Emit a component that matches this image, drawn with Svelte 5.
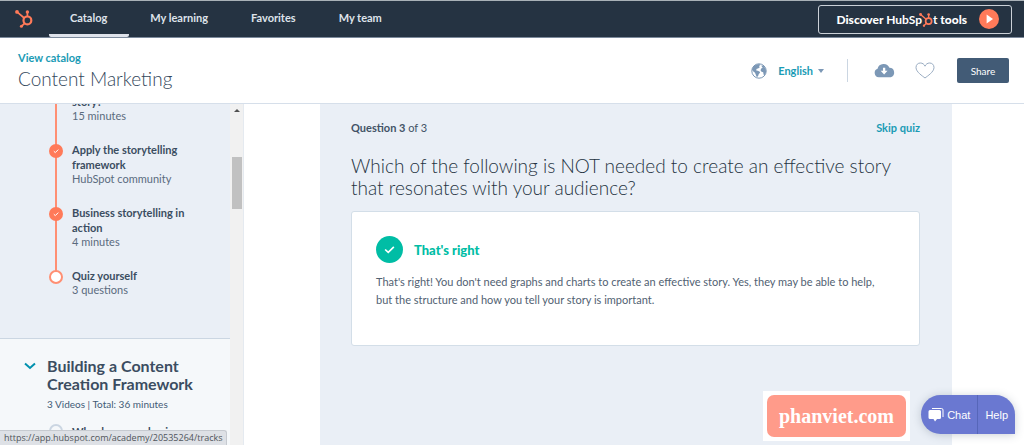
<script>
    let tabs = ['Catalog', 'My learning', 'Favorites', 'My team'];
    let active = 'Catalog';
    let lessons = [
        { lines: ['story?'], info: '15 minutes', done: true },
        { lines: ['Apply the storytelling', 'framework'], info: 'HubSpot community', done: true },
        { lines: ['Business storytelling in', 'action'], info: '4 minutes', done: true },
        { lines: ['Quiz yourself'], info: '3 questions', done: false }
    ];
</script>

{#snippet sprocket()}
    <svg class="sprocket" viewBox="0 0 18 18" aria-hidden="true">
        <g fill="none" stroke="#ff7a59">
            <circle cx="12.4" cy="10.4" r="3.9" stroke-width="2.2" />
            <path d="M12.4 6.5V2.2M9.2 8L2 1.9M9.6 13.3L6.6 16.2" stroke-width="1.7" />
        </g>
        <g fill="#ff7a59">
            <circle cx="12.4" cy="1.9" r="1.7" />
            <circle cx="2" cy="1.9" r="1.9" />
            <circle cx="6.4" cy="16.3" r="1.5" />
        </g>
    </svg>
{/snippet}

<div class="page">
    <header class="topbar">
        <a class="logo" href="#home" aria-label="HubSpot">{@render sprocket()}</a>
        <nav>
            {#each tabs as tab}
                <a class="tab" class:active={tab == active} href="#{tab}">{tab}</a>
            {/each}
        </nav>
        <button class="discover">
            <span>Discover <span class="brand">HubSp{@render sprocket()}t</span> tools</span>
            <svg class="play" viewBox="0 0 20 20" aria-hidden="true">
                <circle cx="10" cy="10" r="10" fill="#ff7a59" />
                <path d="M7.6 5.4L14 10l-6.4 4.6z" fill="#fff" />
            </svg>
        </button>
    </header>

    <div class="subbar">
        <div class="course">
            <a href="#catalog">View catalog</a>
            <h1>Content Marketing</h1>
        </div>
        <div class="tools">
            <button class="language">
                <svg class="globe" viewBox="0 0 16 16" aria-hidden="true">
                    <circle cx="8" cy="8" r="7.2" fill="#fff" stroke="#7c98b6" />
                    <path d="M1 6.5C1.8 3.5 4.5 1 8.3.9L9.5 2 8 3l.8 1.2L7 5.500 5.800 5.800 5 7.200l1.600.6 1.900.7.6 1.200-1.300 1.300-.7 2-1.300 1.300-1-2.500L4 9.800 1.800 8z" fill="#7c98b6" />
                    <path d="M10.500 2.200l2.200.7 2 3 .4 3-1.300 3.200-1.200-.4-.4-2.500-1.700-.4-1-1.600.7-1.700 1.500-.7-.9-1z" fill="#7c98b6" />
                </svg>
                <span>English</span>
                <i class="caret"></i>
            </button>
            <span class="divider"></span>
            <button class="icon" aria-label="Download">
                <svg class="cloud" viewBox="0 0 22 15" aria-hidden="true">
                    <path d="M5 14.500A4.600 4.600 0 0 1 3.700 5.600 6.600 6.600 0 0 1 16.200 4.700 5 5 0 0 1 17.500 14.500z" fill="#7c98b6" />
                    <path d="M9.400 4.500h2.400v3.200h2.400l-3.600 4-3.600-4h2.400z" fill="#fff" />
                </svg>
            </button>
            <button class="icon" aria-label="Add to favorites">
                <svg class="heart" viewBox="0 0 20 17" aria-hidden="true">
                    <path d="M10 16C7.500 14 1 10 1 5.500 1 2.700 3 1 5.300 1 7.600 1 9.200 2.300 10 4.200 10.800 2.300 12.400 1 14.700 1 17 1 19 2.700 19 5.500 19 10 12.500 14 10 16z" fill="none" stroke="#99acc2" />
                </svg>
            </button>
            <button class="share">Share</button>
        </div>
    </div>

    <div class="content">
        <aside>
            <div class="outline">
                <ol class="lessons">
                    {#each lessons as lesson}
                        <li>
                            <span class="step" class:done={lesson.done}>
                                {#if lesson.done}
                                    <svg viewBox="0 0 14 14" aria-hidden="true"><path d="M4.800 7.200l1.500 1.400 3-3" fill="none" stroke="#fff" /></svg>
                                {/if}
                            </span>
                            <a href="#lesson">
                                {#each lesson.lines as line}
                                    <b>{line}</b>
                                {/each}
                                <small>{lesson.info}</small>
                            </a>
                        </li>
                    {/each}
                </ol>
                <section class="chapter">
                    <svg class="chevron" viewBox="0 0 12 8" aria-hidden="true"><path d="M1 1.500l5 4.500 5-4.500" fill="none" stroke="#0091ae" stroke-width="2" /></svg>
                    <div>
                        <h2>Building a Content Creation Framework</h2>
                        <p>3 Videos | Total: 36 minutes</p>
                        <a class="next" href="#next"><i></i>Why does your business</a>
                    </div>
                </section>
            </div>
            <div class="scrollbar">
                <i class="up"></i>
                <i class="thumb"></i>
            </div>
        </aside>

        <main>
            <div class="quiz">
                <div class="progress">
                    <span><b>Question 3</b> of 3</span>
                    <a href="#skip">Skip quiz</a>
                </div>
                <h2>Which of the following is NOT needed to create an effective story that resonates with your audience?</h2>
                <div class="answer">
                    <h3>
                        <svg viewBox="0 0 26 26" aria-hidden="true">
                            <circle cx="13" cy="13" r="13" fill="#00bda5" />
                            <path d="M8.800 13l3 2.800 5.400-5.300" fill="none" stroke="#fff" stroke-width="1.600" />
                        </svg>
                        That's right
                    </h3>
                    <p>That's right! You don't need graphs and charts to create an effective story. Yes, they may be able to help, but the structure and how you tell your story is important.</p>
                </div>
            </div>
        </main>
    </div>

    <div class="status">https://app.hubspot.com/academy/20535264/tracks</div>
    <div class="watermark"><span>phanviet.com</span></div>
    <div class="support">
        <button>
            <svg viewBox="0 0 16 15" aria-hidden="true">
                <path d="M4 1.500h9.500a1.500 1.500 0 0 1 1.500 1.500v7" fill="none" stroke="#fff" />
                <path d="M2 3h9.500a1.500 1.500 0 0 1 1.500 1.500v6A1.500 1.500 0 0 1 11.500 12H9l-2 2.500L5.500 12H2A1.500 1.500 0 0 1 .5 10.500v-6A1.500 1.500 0 0 1 2 3z" fill="#fff" />
            </svg>
            Chat
        </button>
        <button>Help</button>
    </div>
</div>

<style>
    :global(body){
        margin: 0;
    }
    .page{
        display: flex;
        flex-direction: column;
        height: 100vh;
        overflow: hidden;
        position: relative;
        font-family: Lato, "Open Sans", sans-serif;
        font-size: 11px;
        color: #33475b;
        background: #fff;
    }
    a{
        color: #1a9bb5;
        text-decoration: none;
    }
    button{
        font: inherit;
        border: none;
        background: none;
        padding: 0;
        cursor: pointer;
    }
    svg{
        display: block;
    }
    h1, h2, h3, p, ol{
        margin: 0;
        padding: 0;
    }
    .topbar{
        display: flex;
        align-items: stretch;
        flex: none;
        height: 36px;
        border-top: 1px solid #a9b1b7;
        border-bottom: 1px solid #7c8a9c;
        background: #253342;
    }
    .logo{
        display: flex;
        align-items: center;
        padding-left: 15px;
        width: 34px;
    }
    .logo .sprocket{
        width: 18px;
        height: 18px;
    }
    nav{
        display: flex;
        flex: 1;
    }
    .tab{
        display: flex;
        align-items: center;
        padding: 0 22px 0 21px;
        border-bottom: 3px solid transparent;
        color: #dfe3eb;
        font-weight: 700;
        line-height: 34px;
    }
    .tab.active{
        border-color: #dfe3eb;
        border-radius: 2px;
    }
    .discover{
        display: flex;
        align-items: center;
        gap: 12px;
        align-self: center;
        height: 29px;
        margin-right: 12px;
        padding: 0 12px 0 17px;
        border: 1px solid #cbd1d8;
        border-radius: 3px;
        color: #fff;
        font-size: 12px;
        font-weight: 900;
    }
    .brand{
        font-weight: 700;
    }
    .brand .sprocket{
        display: inline-block;
        width: 14px;
        height: 14px;
        margin: 0 0 0 -3px;
        vertical-align: -3px;
    }
    .play{
        width: 20px;
        height: 20px;
    }
    .subbar{
        display: flex;
        justify-content: space-between;
        align-items: center;
        flex: none;
        height: 65px;
        padding: 0 15px 0 18px;
        border-bottom: 1px solid #d6dfea;
    }
    .course a{
        display: block;
        font-weight: 700;
        line-height: 16px;
    }
    h1{
        color: #33475b;
        font-size: 19px;
        font-weight: 300;
        line-height: 26px;
    }
    .tools{
        display: flex;
        align-items: center;
    }
    .language{
        display: flex;
        align-items: center;
        color: #1a9bb5;
        font-weight: 700;
    }
    .globe{
        width: 16px;
        height: 16px;
        margin-right: 11px;
    }
    .caret{
        margin-left: 5px;
        border: 3px solid transparent;
        border-top: 4px solid #7c98b6;
        border-bottom: 0;
    }
    .divider{
        width: 1px;
        height: 23px;
        margin: 0 26px 0 23px;
        background: #cbd6e2;
    }
    .cloud{
        width: 21px;
        height: 15px;
    }
    .heart{
        width: 20px;
        height: 17px;
        margin: 0 22px 0 20px;
    }
    .share{
        width: 52px;
        height: 25px;
        border-radius: 2px;
        background: #425b76;
        color: #fff;
        font-size: 10px;
    }
    .content{
        display: flex;
        flex: 1;
        min-height: 0;
    }
    aside{
        display: flex;
        flex: none;
        width: 243px;
        border-right: 1px solid #e5eaf0;
        overflow: hidden;
    }
    .outline{
        flex: 1;
        background: #eaeff6;
    }
    .lessons{
        list-style: none;
        margin-top: -10px;
        padding-bottom: 22px;
        border-bottom: 1px solid #cbd6e2;
    }
    .lessons li{
        display: flex;
        gap: 9px;
        padding: 0 0 19px 49px;
        position: relative;
    }
    .lessons li:not(:last-child)::before{
        content: "";
        position: absolute;
        left: 55px;
        top: 6px;
        width: 2px;
        height: 100%;
        background: #ff8f73;
    }
    .step{
        flex: none;
        box-sizing: border-box;
        width: 14px;
        height: 14px;
        margin-top: 2px;
        border: 2px solid #ff8f73;
        border-radius: 50%;
        background: #fff;
        position: relative;
    }
    .step.done{
        border: none;
        background: #ff7a59;
    }
    .lessons li:first-child .step{
        visibility: hidden;
    }
    .lessons b, .lessons small{
        display: block;
        color: #3b4d61;
        font-size: 11px;
        line-height: 15px;
    }
    .lessons small{
        color: #5a6b7e;
        line-height: 14px;
    }
    .chapter{
        display: flex;
        gap: 11px;
        height: 300px;
        padding: 18px 8px 0 24px;
        background: #f5f8fa;
    }
    .chevron{
        flex: none;
        width: 12px;
        height: 8px;
        margin-top: 5px;
    }
    .chapter h2{
        color: #3b4d61;
        font-size: 16px;
        font-weight: 700;
        line-height: 18px;
    }
    .chapter p{
        margin-top: 4px;
        color: #425b76;
        font-size: 10px;
        line-height: 15px;
    }
    .next{
        display: flex;
        gap: 9px;
        margin-top: 12px;
        color: #3b4d61;
        font-size: 11px;
        font-weight: 700;
        line-height: 15px;
        white-space: nowrap;
    }
    .next i{
        box-sizing: border-box;
        width: 14px;
        height: 14px;
        margin-left: 2px;
        border: 2px solid #cbd6e2;
        border-radius: 50%;
    }
    .scrollbar{
        flex: none;
        width: 13px;
        background: #f1f1f1;
    }
    .up{
        display: block;
        width: 0;
        margin: 5px auto 45px;
        border: 3px solid transparent;
        border-bottom: 3px solid #505050;
        border-top: 0;
    }
    .thumb{
        display: block;
        width: 10px;
        height: 52px;
        margin: 0 auto;
        background: #c1c1c1;
    }
    main{
        display: flex;
        flex: 1;
        padding: 0 72px 0 76px;
    }
    .quiz{
        flex: 1;
        padding: 16px 32px 0 31px;
        background: #eaeff6;
    }
    .progress{
        display: flex;
        justify-content: space-between;
        color: #425366;
        line-height: 16px;
    }
    .progress a{
        font-weight: 700;
    }
    .quiz h2{
        margin-top: 19px;
        color: #253342;
        font-size: 19px;
        font-weight: 300;
        line-height: 22px;
    }
    .answer{
        margin-top: 12px;
        padding: 24px 36px 36px 24px;
        border: 1px solid #d3dee8;
        border-radius: 3px;
        background: #fff;
    }
    h3{
        display: flex;
        align-items: center;
        gap: 11px;
        color: #00bda5;
        font-size: 13px;
        font-weight: 900;
    }
    h3 svg{
        width: 27px;
        height: 27px;
    }
    .answer p{
        margin-top: 10px;
        color: #516172;
        font-size: 11px;
        line-height: 18px;
    }
    .status{
        position: absolute;
        left: 0;
        bottom: 0;
        padding: 0 4px;
        border-top: 1px solid #c6cad0;
        border-right: 1px solid #c6cad0;
        border-radius: 0 3px 0 0;
        background: #dee1e6;
        color: #50555b;
        font-family: "Open Sans", sans-serif;
        font-size: 9px;
        line-height: 14px;
    }
    .watermark{
        position: absolute;
        right: 114px;
        bottom: 4px;
        padding: 4px;
        background: #fff;
    }
    .watermark span{
        display: block;
        padding: 0 12px;
        border-radius: 7px;
        background: #ff9b8a;
        color: #fff;
        font-family: "Liberation Serif", serif;
        font-size: 20px;
        font-weight: 700;
        line-height: 42px;
    }
    .support{
        display: flex;
        position: absolute;
        right: 9px;
        bottom: 11px;
        border-radius: 20px 20px 0 20px;
        background: #6a78d1;
        box-shadow: 0 1px 8px rgba(51, 71, 91, .25);
    }
    .support button{
        display: flex;
        align-items: center;
        gap: 3px;
        height: 39px;
        padding: 0 7px;
        color: #fff;
        font-family: "Liberation Sans", sans-serif;
        font-size: 11px;
    }
    .support button + button{
        border-left: 1px solid #5666b9;
    }
    .support svg{
        width: 16px;
        height: 15px;
    }
</style>
